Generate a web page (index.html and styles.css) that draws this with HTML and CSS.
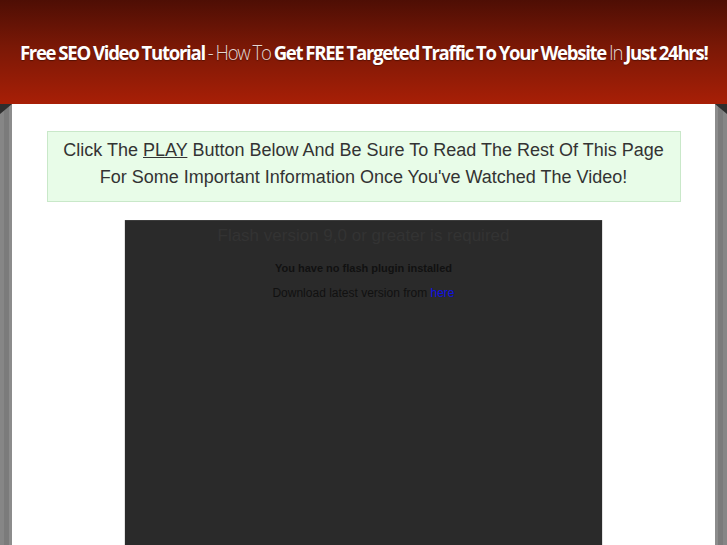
FILE: index.html
```html
<!DOCTYPE html>
<html>
<head>
<meta charset="utf-8">
<link rel="stylesheet" href="styles.css">
</head>
<body>
<header class="header">
  <h1 class="title"><b>Free SEO Video Tutorial</b> <span class="light">- How To</span> <b>Get FREE Targeted Traffic To Your Website</b> <span class="light">In</span> <b>Just 24hrs!</b></h1>
</header>
<div class="page">
  <div class="side side-left"></div>
  <main class="column">
    <div class="notice">
      <p>Click The <u>PLAY</u> Button Below And Be Sure To Read The Rest Of This Page<br>For Some Important Information Once You've Watched The Video!</p>
    </div>
    <div class="video">
      <p class="req">Flash version 9,0 or greater is required</p>
      <p class="noplugin">You have no flash plugin installed</p>
      <p class="download">Download latest version from <a href="#">here</a></p>
    </div>
  </main>
  <div class="side side-right"></div>
</div>
</body>
</html>
```
FILE: styles.css
```css
html, body {
  margin: 0;
  padding: 0;
  height: 100%;
  overflow: hidden;
}
body {
  background: #828282;
  font-family: "Liberation Sans", Arial, sans-serif;
}
.header {
  height: 104px;
  background: linear-gradient(to bottom, #4e0e04 0%, #7a1806 45%, #a81f06 100%);
  display: flex;
  align-items: center;
  justify-content: center;
  overflow: hidden;
}
.title {
  margin: 0;
  font-family: "Open Sans", sans-serif;
  font-size: 20px;
  font-weight: 400;
  letter-spacing: -1.4px;
  word-spacing: -0.5px;
  color: #fff;
  white-space: nowrap;
  text-shadow: 0 1px 1px rgba(0,0,0,0.35);
  transform: scaleX(0.93);
  flex: none;
}
.title b {
  font-weight: 700;
}
.title .light {
  font-weight: 300;
  color: #e6d6d2;
}
.page {
  display: flex;
  height: 441px;
}
.side {
  width: 12px;
  flex: none;
  position: relative;
}
.side-left {
  background: linear-gradient(to right, #868686 0px, #868686 4px, #7b7b7b 4px, #7b7b7b 9px, #8c8c8c 9px, #8c8c8c 12px);
}
.side-right {
  background: linear-gradient(to right, #8c8c8c 0px, #8c8c8c 3px, #7b7b7b 3px, #7b7b7b 8px, #868686 8px);
}
.side-left::before {
  content: "";
  position: absolute;
  top: 0;
  left: 0;
  width: 0;
  height: 0;
  border-top: 10px solid #2e2e2e;
  border-right: 12px solid transparent;
}
.side-right::before {
  content: "";
  position: absolute;
  top: 0;
  right: 0;
  width: 0;
  height: 0;
  border-top: 10px solid #2e2e2e;
  border-left: 12px solid transparent;
}
.column {
  flex: 1;
  background: #fff;
  display: flex;
  flex-direction: column;
  align-items: center;
  padding-top: 27px;
}
.notice {
  width: 632px;
  height: 69px;
  box-sizing: content-box;
  background: #e8fce8;
  border: 1px solid #c9e8c9;
  display: flex;
  align-items: flex-start;
  justify-content: center;
}
.notice p {
  margin: 0;
  padding-top: 5px;
  font-size: 18px;
  line-height: 27px;
  color: #333;
  text-align: center;
}
.notice u {
  text-decoration: underline;
}
.video {
  margin-top: 18px;
  width: 477px;
  flex: 1;
  background: #2a2a2a;
  border-top: 1px solid #3c3c3c;
  box-shadow: -1px 0 0 #e2e2e2, 1px 0 0 #e2e2e2;
  text-align: center;
}
.video p {
  margin: 0;
}
.req {
  font-size: 17px;
  color: #333;
  padding-top: 5px;
  line-height: 20px;
}
.noplugin {
  margin-top: 15px !important;
  font-size: 11px;
  font-weight: 700;
  color: #111;
  line-height: 14px;
}
.download {
  margin-top: 11px !important;
  font-size: 12px;
  color: #111;
  line-height: 14px;
}
.download a {
  color: #1010e0;
  text-decoration: none;
}
```
